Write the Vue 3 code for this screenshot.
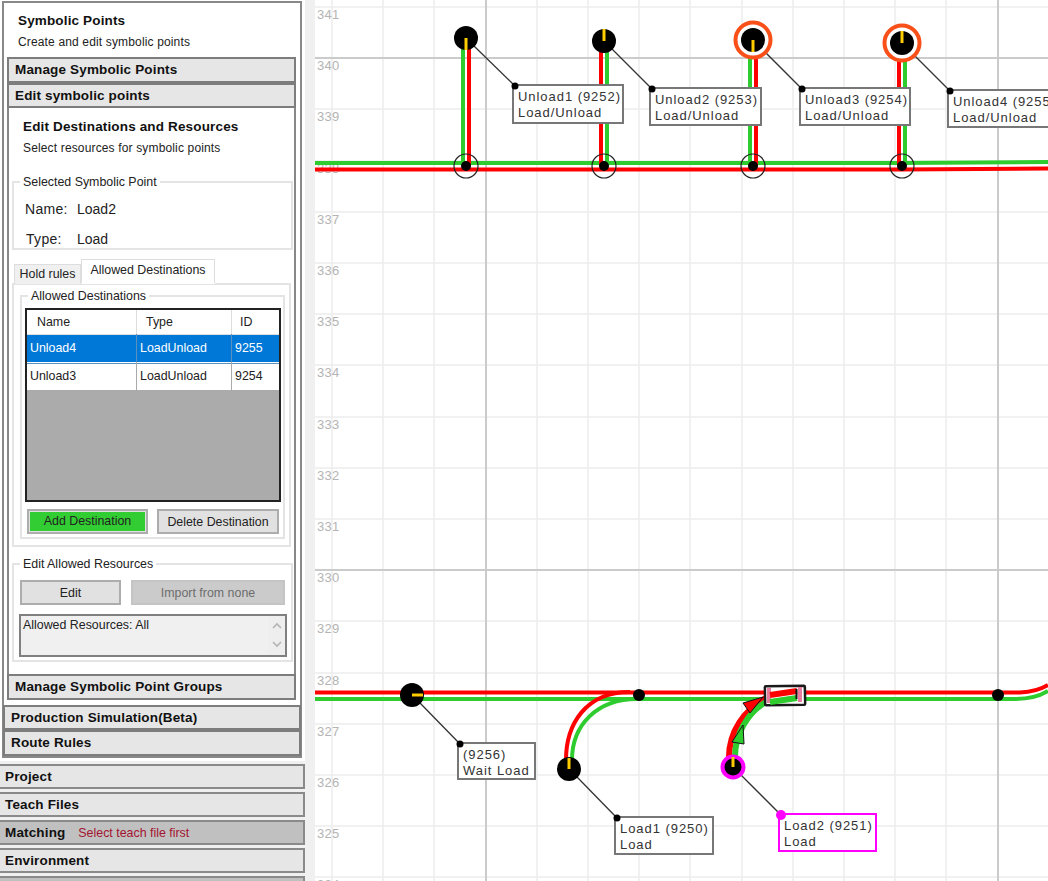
<template>
  <div class="app">
    <aside class="side">
      <div class="outer">
        <div class="panel">
          <div class="panel-head">
            <div class="title">Symbolic Points</div>
            <div class="sub">Create and edit symbolic points</div>
          </div>
          <div class="group">
            <div class="bar">Manage Symbolic Points</div>
            <div class="bar">Edit symbolic points</div>
            <div class="body">
              <div class="body-head">
                <div class="title">Edit Destinations and Resources</div>
                <div class="sub">Select resources for symbolic points</div>
              </div>

              <fieldset class="box selected">
                <legend>Selected Symbolic Point</legend>
                <div class="info"><span class="info-key">Name:</span><span>Load2</span></div>
                <div class="info"><span class="info-key type-key">Type:</span><span>Load</span></div>
              </fieldset>

              <div class="tabs">
                <div class="tab">Hold rules</div>
                <div class="tab active">Allowed Destinations</div>
              </div>
              <div class="tab-page">
                <fieldset class="box dest">
                  <legend>Allowed Destinations</legend>
                  <div class="grid">
                    <div class="row head">
                      <div>Name</div><div>Type</div><div>ID</div>
                    </div>
                    <div v-for="d in destinations" :key="d.id" class="row" :class="{ sel: d.sel }">
                      <div>{{ d.name }}</div><div>{{ d.type }}</div><div>{{ d.id }}</div>
                    </div>
                  </div>
                  <div class="btns">
                    <button class="btn add"><span>Add Destination</span></button>
                    <button class="btn del">Delete Destination</button>
                  </div>
                </fieldset>
              </div>

              <fieldset class="box res">
                <legend>Edit Allowed Resources</legend>
                <div class="btns res-btns">
                  <button class="btn edit">Edit</button>
                  <button class="btn imp">Import from none</button>
                </div>
                <div class="memo">
                  <div class="memo-text">Allowed Resources: All</div>
                  <div class="scroll">
                    <svg width="12" height="8" viewBox="0 0 12 8"><path d="M2 6l4-4 4 4" fill="none" stroke="#b4b4b4" stroke-width="1.6" /></svg>
                    <svg width="12" height="8" viewBox="0 0 12 8"><path d="M2 2l4 4 4-4" fill="none" stroke="#b4b4b4" stroke-width="1.6" /></svg>
                  </div>
                </div>
              </fieldset>
            </div>
            <div class="bar">Manage Symbolic Point Groups</div>
          </div>
          <div class="gap"></div>
          <div class="bar wide">Production Simulation(Beta)</div>
          <div class="bar wide">Route Rules</div>
        </div>
      </div>
      <div class="main-bars">
        <div class="bar main">Project</div>
        <div class="bar main">Teach Files</div>
        <div class="bar main off">Matching <span class="warn">Select teach file first</span></div>
        <div class="bar main">Environment</div>
        <div class="bar main off"></div>
      </div>
    </aside>

    <svg class="canvas" width="733" height="881" viewBox="315 0 733 881">
      <line v-for="x in minorX" :key="'x' + x" :x1="x" :x2="x" y1="0" y2="881" class="minor" />
      <line v-for="y in minorY" :key="'y' + y" x1="315" x2="1048" :y1="y" :y2="y" class="minor" />
      <line v-for="x in [486, 998]" :key="'X' + x" :x1="x" :x2="x" y1="0" y2="881" class="major" />
      <line v-for="y in [58, 570]" :key="'Y' + y" x1="315" x2="1048" :y1="y" :y2="y" class="major" />
      <text v-for="(n, i) in axis" :key="n" x="317" :y="19 + i * 51.2" class="axis">{{ n }}</text>

      <!-- top rail -->
      <path d="M315 163H900L1048 162" class="rail green" />
      <path d="M315 169.5H900L1048 168.5" class="rail red" />
      <g v-for="s in stems" :key="s.x">
        <line :x1="s.x + s.g" :x2="s.x + s.g" :y1="s.y" y2="166" class="rail green" />
        <line :x1="s.x - s.g" :x2="s.x - s.g" :y1="s.y" y2="166" class="rail red" />
        <circle :cx="s.x" cy="166" r="12" class="ring" />
        <circle :cx="s.x" cy="166" r="5" />
      </g>

      <!-- bottom rail -->
      <path d="M315 692.5H1020C1032 692 1040 690 1048 685" class="rail red" />
      <path d="M315 699H1015C1030 699 1040 696 1048 691" class="rail green" />
      <path d="M566 760C566 725 585 692 630 692" class="rail red" />
      <path d="M572 760C572 725 597 699 637 699" class="rail green" />
      <path d="M729 757C729 732 744 710 766 698" class="rail red thick" />
      <path d="M735 757C735 734 748 712 766 702" class="rail green thick" />
      <polygon points="743,703 763,697 750,713" fill="#f00" stroke="#111" />
      <polygon points="743,725 732,742 744,744" fill="#2fcc2f" stroke="#111" />
      <rect x="765" y="686" width="40" height="19" rx="1" fill="#fff" stroke="#1a1a1a" stroke-width="2.5" transform="rotate(-1 785 695)" />
      <rect x="767" y="688" width="4" height="15" fill="#e87ca0" />
      <rect x="798" y="687" width="4" height="15" fill="#e87ca0" />
      <path d="M770 695L797 691" class="rail red thick" />
      <path d="M770 702L797 698" class="rail green thick" />
      <line x1="796.500" x2="796.500" y1="689" y2="699" stroke="#111" stroke-width="2" />
      <circle cx="639" cy="695" r="6" />
      <circle cx="998" cy="695" r="6" />

      <!-- labels -->
      <g v-for="l in labels" :key="l.a">
        <line :x1="l.nx" :y1="l.ny" :x2="l.x + 2" :y2="l.y + 1" class="lead" />
        <rect :x="l.x" :y="l.y" :width="l.w" :height="l.h" class="lbl" :class="{ pink: l.pink }" />
        <circle :cx="l.x + 2" :cy="l.y + 1" :r="l.pink ? 5 : 3.500" :fill="l.pink ? '#f0f' : '#000'" />
        <text :x="l.x + 5" :y="l.y + 16" class="lbl-text">{{ l.a }}</text>
        <text :x="l.x + 5" :y="l.y + 32" class="lbl-text">{{ l.b }}</text>
      </g>

      <!-- nodes -->
      <circle v-for="r in [[753, 40], [902, 43]]" :key="r[0]" :cx="r[0]" :cy="r[1]" r="17.500" class="orange" />
      <g v-for="n in nodes" :key="n.x">
        <circle :cx="n.x" :cy="n.y" r="12" />
        <line :x1="n.x" :y1="n.y" :x2="n.x + n.dx" :y2="n.y + n.dy" class="tick" />
      </g>
      <circle cx="733" cy="767" r="10.500" class="magenta" />
      <line x1="733" y1="767" x2="733" y2="757" class="tick" />
    </svg>
  </div>
</template>

<script setup>
const destinations = [
  { name: 'Unload4', type: 'LoadUnload', id: 9255, sel: true },
  { name: 'Unload3', type: 'LoadUnload', id: 9254 }
]

const minorX = Array.from({ length: 15 }, (_, i) => Math.round(332 + i * 51.2))
const minorY = Array.from({ length: 18 }, (_, i) => Math.round(7 + i * 51.2))
const axis = Array.from({ length: 18 }, (_, i) => 341 - i)

const stems = [
  { x: 466, y: 44, g: -3 },
  { x: 604, y: 47, g: 3 },
  { x: 753, y: 46, g: -3 },
  { x: 902, y: 49, g: 3 }
]

const nodes = [
  { x: 466, y: 38, dx: 0, dy: 12 },
  { x: 604, y: 41, dx: 0, dy: -12 },
  { x: 753, y: 40, dx: 0, dy: 12 },
  { x: 902, y: 43, dx: 0, dy: -12 },
  { x: 412, y: 695, dx: 11, dy: 0 },
  { x: 569, y: 769, dx: 0, dy: -11 }
]

const labels = [
  { a: 'Unload1 (9252)', b: 'Load/Unload', x: 513, y: 85, w: 110, h: 38, nx: 474, ny: 46 },
  { a: 'Unload2 (9253)', b: 'Load/Unload', x: 650, y: 88, w: 111, h: 37, nx: 612, ny: 49 },
  { a: 'Unload3 (9254)', b: 'Load/Unload', x: 800, y: 88, w: 110, h: 37, nx: 761, ny: 48 },
  { a: 'Unload4 (9255)', b: 'Load/Unload', x: 948, y: 90, w: 110, h: 37, nx: 910, ny: 51 },
  { a: '(9256)', b: 'Wait Load', x: 458, y: 743, w: 77, h: 36, nx: 420, ny: 703 },
  { a: 'Load1 (9250)', b: 'Load', x: 615, y: 817, w: 98, h: 37, nx: 577, ny: 777 },
  { a: 'Load2 (9251)', b: 'Load', x: 779, y: 814, w: 97, h: 37, nx: 741, ny: 775, pink: true }
]
</script>

<style scoped>
.app {
  display: flex;
  width: 1048px;
  height: 881px;
  overflow: hidden;
  font-family: "Liberation Sans", Arial, sans-serif;
  font-size: 12.4px;
  color: #222;
}
.side {
  width: 315px;
  flex: none;
  background: #f0f0f0;
}
.outer {
  width: 305px;
  height: 761px;
  background: #fff;
  padding-top: 1px;
  box-sizing: border-box;
}
.panel {
  width: 300px;
  margin-left: 2px;
  height: 757px;
  box-sizing: border-box;
  border: 2px solid #888;
  background: #fff;
}
.panel-head {
  height: 54px;
  padding: 10px 0 0 14px;
  box-sizing: border-box;
}
.title {
  font-weight: bold;
  font-size: 13.5px;
  letter-spacing: .15px;
  line-height: 16px;
  color: #111;
}
.sub {
  margin-top: 6px;
  line-height: 15px;
  font-size: 12px;
  letter-spacing: .15px;
}
.group {
  margin-left: 3px;
  width: 289px;
}
.bar {
  height: 25.500px;
  box-sizing: border-box;
  background: #e6e6e6;
  border: 2px solid #7d7d7d;
  padding-left: 6px;
  font-weight: bold;
  font-size: 13.5px;
  letter-spacing: .15px;
  line-height: 21px;
  color: #111;
  white-space: nowrap;
  overflow: hidden;
}
.body {
  height: 566px;
  box-sizing: border-box;
  border: solid #888;
  border-width: 0 2px;
  background: #fff;
}
.body-head {
  height: 67px;
  padding: 11px 0 0 14px;
  box-sizing: border-box;
}
.box {
  margin: 0;
  padding: 0;
  border: 2px solid #e4e4e4;
  box-sizing: border-box;
  min-width: 0;
}
.box legend {
  margin-left: 6px;
  padding: 0 3px;
  line-height: 14px;
}
.selected {
  margin-left: 3px;
  width: 281px;
  height: 75px;
  padding-top: 5px;
}
.info {
  display: flex;
  height: 30px;
  line-height: 30px;
  font-size: 14px;
  padding-left: 11px;
}
.info-key {
  width: 52px;
  letter-spacing: .3px;
}
.type-key {
  padding-left: 1px;
  width: 51px;
}
.tabs {
  display: flex;
  align-items: flex-end;
  height: 25px;
  margin: 9px 0 -1px 5px;
  position: relative;
  z-index: 1;
}
.tab {
  width: 67px;
  height: 20px;
  box-sizing: border-box;
  background: #f0f0f0;
  border: 1px solid #ddd;
  border-bottom: 0;
  text-align: center;
  line-height: 18px;
}
.tab.active {
  width: 134px;
  height: 25px;
  background: #fff;
  line-height: 21px;
  border-bottom: 2px solid #fff;
}
.tab-page {
  margin-left: 3px;
  width: 279px;
  height: 264px;
  box-sizing: border-box;
  border: 2px solid #e4e4e4;
  padding: 4px 0 0 6px;
}
.dest {
  width: 265px;
  height: 250px;
}
.grid {
  margin: 5px 0 0 3px;
  width: 256px;
  height: 194px;
  box-sizing: border-box;
  border: 2px solid #222;
  background: #ababab;
}
.row {
  display: grid;
  grid-template-columns: 110px 95px 47px;
  height: 28px;
  background: #fff;
  line-height: 29px;
}
.row > div {
  border-right: 1px solid #aaa;
  border-bottom: 1px solid #aaa;
  padding-left: 3px;
}
.row > div:last-child {
  border-right: 0;
}
.head {
  height: 24px;
  line-height: 24px;
}
.head > div {
  padding-left: 10px;
  border-color: #ddd;
}
.head > div:nth-child(2) {
  padding-left: 9px;
}
.head > div:last-child {
  padding-left: 8px;
}
.sel {
  background: #0078d7;
  color: #fff;
}
.sel > div {
  border-color: #5b8fbd;
}
.btns {
  display: flex;
  justify-content: space-between;
  margin: 7px 0 0 5px;
  width: 252px;
}
.btn {
  height: 25px;
  box-sizing: border-box;
  border: 2px solid #adadad;
  background: #e1e1e1;
  font: inherit;
  color: #222;
  padding: 0;
}
.add {
  width: 121px;
  padding: 1px;
}
.add span {
  display: block;
  height: 19px;
  line-height: 19px;
  background: #32cd32;
}
.del {
  width: 122px;
}
.res {
  margin: 10px 0 0 3px;
  width: 281px;
  height: 105px;
}
.res-btns {
  margin: 9px 0 0 6px;
  width: 265px;
}
.edit {
  width: 101px;
}
.imp {
  width: 154px;
  background: #cbcbcb;
  border-color: #c4c4c4;
  color: #6d6d6d;
}
.memo {
  display: flex;
  margin: 9px 0 0 5px;
  width: 268px;
  height: 43px;
  box-sizing: border-box;
  border: 2px solid #808080;
  background: #f0f0f0;
}
.memo-text {
  flex: 1;
  padding: 2px 0 0 2px;
}
.scroll {
  width: 17px;
  display: flex;
  flex-direction: column;
  align-items: center;
  gap: 10px;
  padding-top: 6px;
  box-sizing: border-box;
  background: #eee;
}
.gap {
  height: 5px;
}
.bar.wide {
  margin-left: -1px;
  width: 298px;
  padding-left: 6px;
  line-height: 22px;
}
.main-bars {
  margin-top: 3px;
  width: 305px;
}
.bar.main {
  height: 25px;
  margin-bottom: 3px;
  border-left: 0;
  padding-left: 5px;
  border-color: #8a8a8a;
}
.bar.off {
  background: #c0c0c0;
}
.warn {
  margin-left: 9px;
  font-weight: normal;
  font-size: 12.4px;
  letter-spacing: 0;
  color: #a3142f;
}
.canvas {
  display: block;
  flex: none;
  background: #fff;
}
.minor {
  stroke: #ececec;
  stroke-width: 1.500;
}
.major {
  stroke: #cbcbcb;
  stroke-width: 2;
}
.axis {
  font-size: 13px;
  fill: #b4b4b4;
  letter-spacing: .3px;
}
.rail {
  fill: none;
  stroke-width: 4;
}
.rail.thick {
  stroke-width: 6;
}
.green {
  stroke: #2fcc2f;
}
.red {
  stroke: #f00;
}
.ring {
  fill: none;
  stroke: #222;
  stroke-width: 1.200;
}
.lead {
  stroke: #333;
  stroke-width: 1.300;
}
.lbl {
  fill: #fff;
  stroke: #777;
  stroke-width: 2;
}
.lbl.pink {
  stroke: #f0f;
}
.lbl-text {
  font-size: 13px;
  fill: #333;
  letter-spacing: .95px;
}
.orange {
  fill: #fff;
  stroke: #f9501a;
  stroke-width: 4;
}
.magenta {
  fill: #000;
  stroke: #f0f;
  stroke-width: 4;
}
.tick {
  stroke: #fc0;
  stroke-width: 3;
}
</style>
